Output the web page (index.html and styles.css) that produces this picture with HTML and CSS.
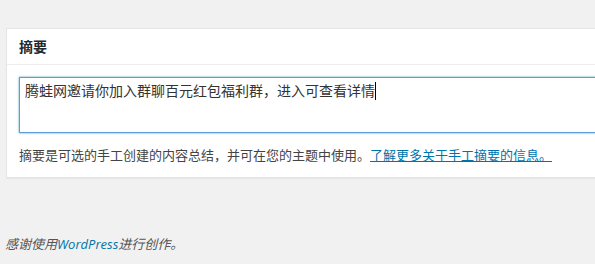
FILE: index.html
```html
<!DOCTYPE html>
<html lang="zh-CN">
<head>
<meta charset="utf-8">
<title>摘要</title>
<link rel="stylesheet" href="styles.css">
</head>
<body>
<div class="wrap">
  <div class="postbox">
    <h2 class="hndle">摘要</h2>
    <div class="inside">
      <div class="excerpt">腾蛙网邀请你加入群聊百元红包福利群，进入可查看详情<span class="caret"></span></div>
      <p class="desc">摘要是可选的手工创建的内容总结，并可在您的主题中使用。<a href="#">了解更多关于手工摘要的信息。</a></p>
    </div>
  </div>
  <p class="footer">感谢使用<a href="#">WordPress</a>进行创作。</p>
</div>
</body>
</html>
```

FILE: styles.css
```css
html, body {
  margin: 0;
  padding: 0;
  background: #f1f1f1;
  overflow: hidden;
}
body {
  font-family: "Open Sans", "Noto Sans CJK SC", sans-serif;
  color: #444;
  font-size: 13px;
}
.wrap {
  padding: 28px 0 0 6px;
}
.postbox {
  width: 640px;
  background: #fff;
  border: 1px solid #e5e5e5;
  box-shadow: 0 1px 1px rgba(0, 0, 0, 0.04);
}
.hndle {
  margin: 0;
  height: 35px;
  padding: 0 12px;
  font-size: 14px;
  line-height: 35px;
  font-weight: 700;
  color: #23282d;
  border-bottom: 1px solid #eee;
}
.inside {
  padding: 12px 12px 12px 12px;
}
.excerpt {
  box-sizing: border-box;
  width: 100%;
  height: 56px;
  padding: 3px 5px;
  border: 1px solid #5b9dd9;
  box-shadow: 0 0 2px rgba(30, 140, 190, 0.8);
  font-size: 14px;
  line-height: 20px;
  color: #333;
}
.caret {
  display: inline-block;
  width: 0;
  height: 18px;
  border-left: 1px solid #000;
  vertical-align: -4px;
}
.desc {
  margin: 12px 0 0;
  font-size: 13px;
  line-height: 20px;
  color: #444;
}
.desc a {
  color: #0073aa;
  text-decoration: underline;
}
.footer {
  margin: 56px 0 0 -1px;
  font-size: 13px;
  line-height: 20px;
  font-style: italic;
  color: #555;
}
.footer a {
  color: #0073aa;
  text-decoration: none;
}
```
